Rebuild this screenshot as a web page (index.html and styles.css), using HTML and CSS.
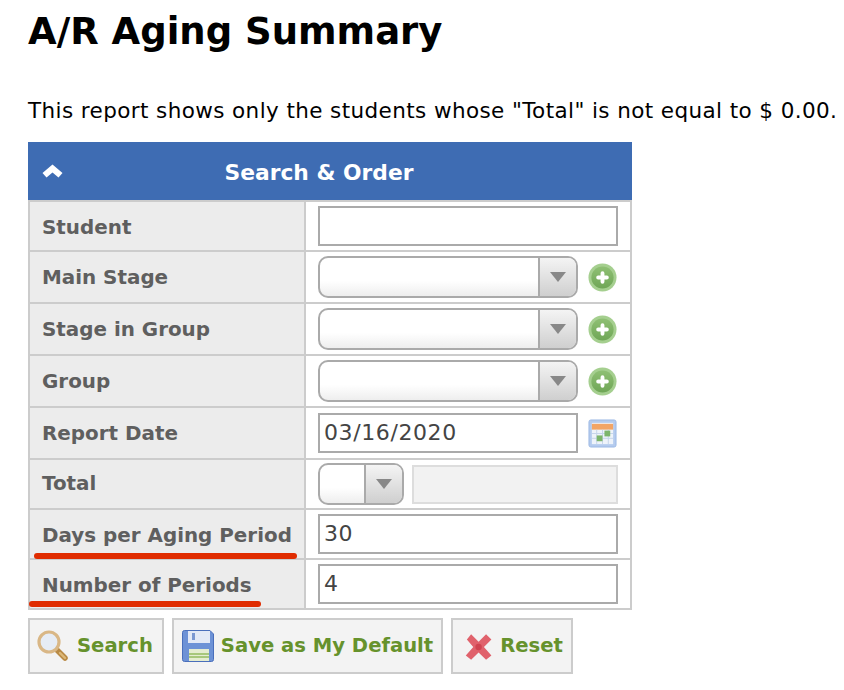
FILE: index.html
```html
<!DOCTYPE html>
<html lang="en">
<head>
<meta charset="utf-8">
<title>A/R Aging Summary</title>
<link rel="stylesheet" href="styles.css">
</head>
<body>
<h1 class="title">A/R Aging Summary</h1>
<p class="intro">This report shows only the students whose "Total" is not equal to $ 0.00.</p>
<section class="panel">
  <header class="panel-head">
    <svg class="chev" width="22" height="14" viewBox="0 0 22 14"><path d="M0.5 9 L10.5 0.5 L20.5 9 L16.5 13.5 L10.5 8.5 L4.5 13.5 Z" fill="#fff"/></svg>
    <span class="panel-title">Search &amp; Order</span>
  </header>
  <table class="form">
    <tr class="r50"><th class="low">Student</th><td><div class="field"><div class="input"></div></div></td></tr>
    <tr class="r52"><th>Main Stage</th><td><div class="field"><div class="select"><span class="sel-main"></span><span class="sel-btn"><i class="tri"></i></span></div>
      <svg class="plus icon" width="29" height="29" viewBox="0 0 30 30"><use href="#plus-icon"/></svg></div></td></tr>
    <tr class="r52"><th>Stage in Group</th><td><div class="field"><div class="select"><span class="sel-main"></span><span class="sel-btn"><i class="tri"></i></span></div>
      <svg class="plus icon" width="29" height="29" viewBox="0 0 30 30"><use href="#plus-icon"/></svg></div></td></tr>
    <tr class="r52"><th>Group</th><td><div class="field"><div class="select"><span class="sel-main"></span><span class="sel-btn"><i class="tri"></i></span></div>
      <svg class="plus icon" width="29" height="29" viewBox="0 0 30 30"><use href="#plus-icon"/></svg></div></td></tr>
    <tr class="r52"><th>Report Date</th><td><div class="field"><div class="input date">03/16/2020</div>
      <svg class="cal icon" width="29" height="29" viewBox="0 0 30 30">
        <rect x="1" y="1" width="28" height="28" rx="2" fill="#b4cbee" stroke="#9db8e4"/>
        <rect x="4" y="4" width="22" height="22" fill="#eef3fa"/>
        <rect x="4" y="5" width="22" height="6" fill="#f2a566"/>
        <path d="M4 15H26M4 20H26M9 11V26M15 11V26M21 11V26" stroke="#c6d5ea" stroke-width="1"/>
        <rect x="9" y="17" width="6" height="6" fill="#7cb56c"/>
        <rect x="17" y="12" width="6" height="6" fill="#7cb56c"/>
      </svg></div></td></tr>
    <tr class="r50"><th class="high">Total</th><td><div class="field"><div class="select small"><span class="sel-main"></span><span class="sel-btn"><i class="tri"></i></span></div><div class="input disabled"></div></div></td></tr>
    <tr class="r50"><th class="low">Days per Aging Period<i class="ink ink-a"></i></th><td><div class="field"><div class="input">30</div></div></td></tr>
    <tr class="r50"><th class="low">Number of Periods<i class="ink ink-b"></i></th><td><div class="field"><div class="input">4</div></div></td></tr>
  </table>
</section>
<div class="actions">
  <button class="btn btn-search">
    <svg class="icon" width="32" height="32" viewBox="0 0 32 32">
      <path d="M20 20 L28 28" stroke="#b98a45" stroke-width="5.5" stroke-linecap="round"/>
      <path d="M23 23 L28 28" stroke="#dcb878" stroke-width="2.4" stroke-linecap="round"/>
      <circle cx="12" cy="12" r="10" fill="#e6ecf5" stroke="#d9b786" stroke-width="3.2"/>
    </svg>
    <span>Search</span>
  </button>
  <button class="btn">
    <svg class="icon" width="32" height="32" viewBox="0 0 32 32">
      <path d="M0.5 2.5 Q0.5 0.5 2.5 0.5 H28 L31.5 4 V29.5 Q31.5 31.5 29.5 31.5 H2.5 Q0.5 31.5 0.5 29.5 Z" fill="#6d92d6" stroke="#4a6fbb"/>
      <rect x="6" y="1" width="22" height="12" fill="#e3e9f6"/>
      <rect x="10" y="3" width="3" height="7" fill="#7b98d2"/>
      <rect x="7" y="19" width="20" height="12" fill="#e4ecd0"/>
      <path d="M7 24H27M7 27H27" stroke="#a7c77c" stroke-width="2"/>
    </svg>
    <span>Save as My Default</span>
  </button>
  <button class="btn">
    <svg class="icon" width="32" height="32" viewBox="-1.5 -1 30 30">
      <path d="M4 8 L8 3 L15 10 L22 3 L27 8 L20 15 L27 23 L22 27 L15 20 L8 27 L3 23 L10 15 Z" fill="#e0626c"/>
      <circle cx="15" cy="15" r="3" fill="#cf4450"/>
    </svg>
    <span>Reset</span>
  </button>
</div>
<svg class="defs" width="0" height="0">
  <defs>
    <linearGradient id="plus-fill" x1="0" y1="0" x2="0" y2="1">
      <stop offset="0" stop-color="#8fc074"/>
      <stop offset="1" stop-color="#6fa656"/>
    </linearGradient>
    <symbol id="plus-icon" viewBox="0 0 30 30">
      <circle cx="15" cy="15" r="14.5" fill="#a5cf8f"/>
      <circle cx="15" cy="15" r="11.5" fill="url(#plus-fill)"/>
      <path d="M15 10.5V19.5M10.5 15H19.5" stroke="#fff" stroke-width="4" stroke-linecap="round"/>
    </symbol>
  </defs>
</svg>
</body>
</html>
```
FILE: styles.css
```css
* { box-sizing: border-box; }
html, body { margin: 0; padding: 0; background: #fff; }
body {
  padding: 0 0 0 28px;
  font-family: "DejaVu Sans", Verdana, sans-serif;
  color: #000;
  overflow: hidden;
  height: 690px;
}
.title {
  margin: 0;
  padding-top: 10px;
  height: 98px;
  font-size: 37px;
  line-height: 44px;
  font-weight: 700;
}
.intro {
  margin: 0;
  height: 44px;
  font-size: 21.5px;
  letter-spacing: 0.4px;
  line-height: 26px;
  white-space: nowrap;
}
.panel { width: 604px; }
.panel-head {
  position: relative;
  height: 58px;
  padding-top: 2px;
  background: #3e6cb3;
  color: #fff;
  display: flex;
  align-items: center;
  justify-content: center;
}
.chev { position: absolute; left: 14px; top: 22px; }
.panel-title { font-weight: 700; font-size: 21.8px; margin-left: -22px; }
.form {
  width: 604px;
  table-layout: fixed;
  border-collapse: collapse;
  border: 2px solid #ccc;
}
.form th, .form td { border: 2px solid #ccc; padding: 0; }
.form th {
  width: 276px;
  background: #ececec;
  color: #5f5f5f;
  text-align: left;
  font-size: 19.9px;
  font-weight: 700;
  padding: 0 0 0 12px;
  white-space: nowrap;
  position: relative;
}
.form th.low { padding-top: 2px; }
.form th.high { padding-bottom: 2px; }
.form td { padding: 0 12px; }
.r50 { height: 50px; }
.r52 { height: 52px; }
.field { display: flex; align-items: center; justify-content: space-between; gap: 8px; }
.input {
  flex: 1;
  height: 40px;
  border: 2px solid #aaa;
  background: #fff;
  color: #444;
  font-size: 22px;
  letter-spacing: 0.6px;
  line-height: 36px;
  padding-left: 4px;
}
.date { flex: 0 0 260px; }
.disabled { background: #f2f2f2; border-color: #ddd; height: 39px; }
.select {
  flex: 0 0 260px;
  height: 42px;
  border: 2px solid #aaa;
  border-radius: 10px;
  overflow: hidden;
  display: flex;
  background: linear-gradient(#fff 60%, #eee);
}
.select.small { flex-basis: 86px; }
.sel-main { flex: 1; }
.sel-btn {
  width: 38px;
  border-left: 2px solid #aaa;
  background: linear-gradient(#f4f4f4, #cfcfcf);
  display: flex;
  align-items: center;
  justify-content: center;
}
.tri {
  width: 0; height: 0;
  border-left: 8px solid transparent;
  border-right: 8px solid transparent;
  border-top: 10px solid #888;
}
.plus, .cal { flex: none; margin-right: 1px; }
.icon { filter: blur(0.5px); flex: none; }
.ink {
  position: absolute;
  height: 6px;
  border-radius: 3px;
  background: #e02c00;
}
.ink-a { left: 4px; width: 263px; bottom: -1px; }
.ink-b { left: -1px; width: 232px; bottom: 1px; }
.actions { display: flex; gap: 8px; margin-top: 8px; }
.btn {
  height: 56px;
  border: 2px solid #ccc;
  background: #f3f3f3;
  display: flex;
  align-items: center;
  gap: 7px;
  padding: 0 8px 2px;
  font-family: inherit;
  font-size: 19.6px;
  font-weight: 700;
  color: #66922c;
}
.btn-search { padding: 0 9px 2px 7px; gap: 8px; }
.btn .icon { margin-top: 2px; }
.defs { position: absolute; }
```
